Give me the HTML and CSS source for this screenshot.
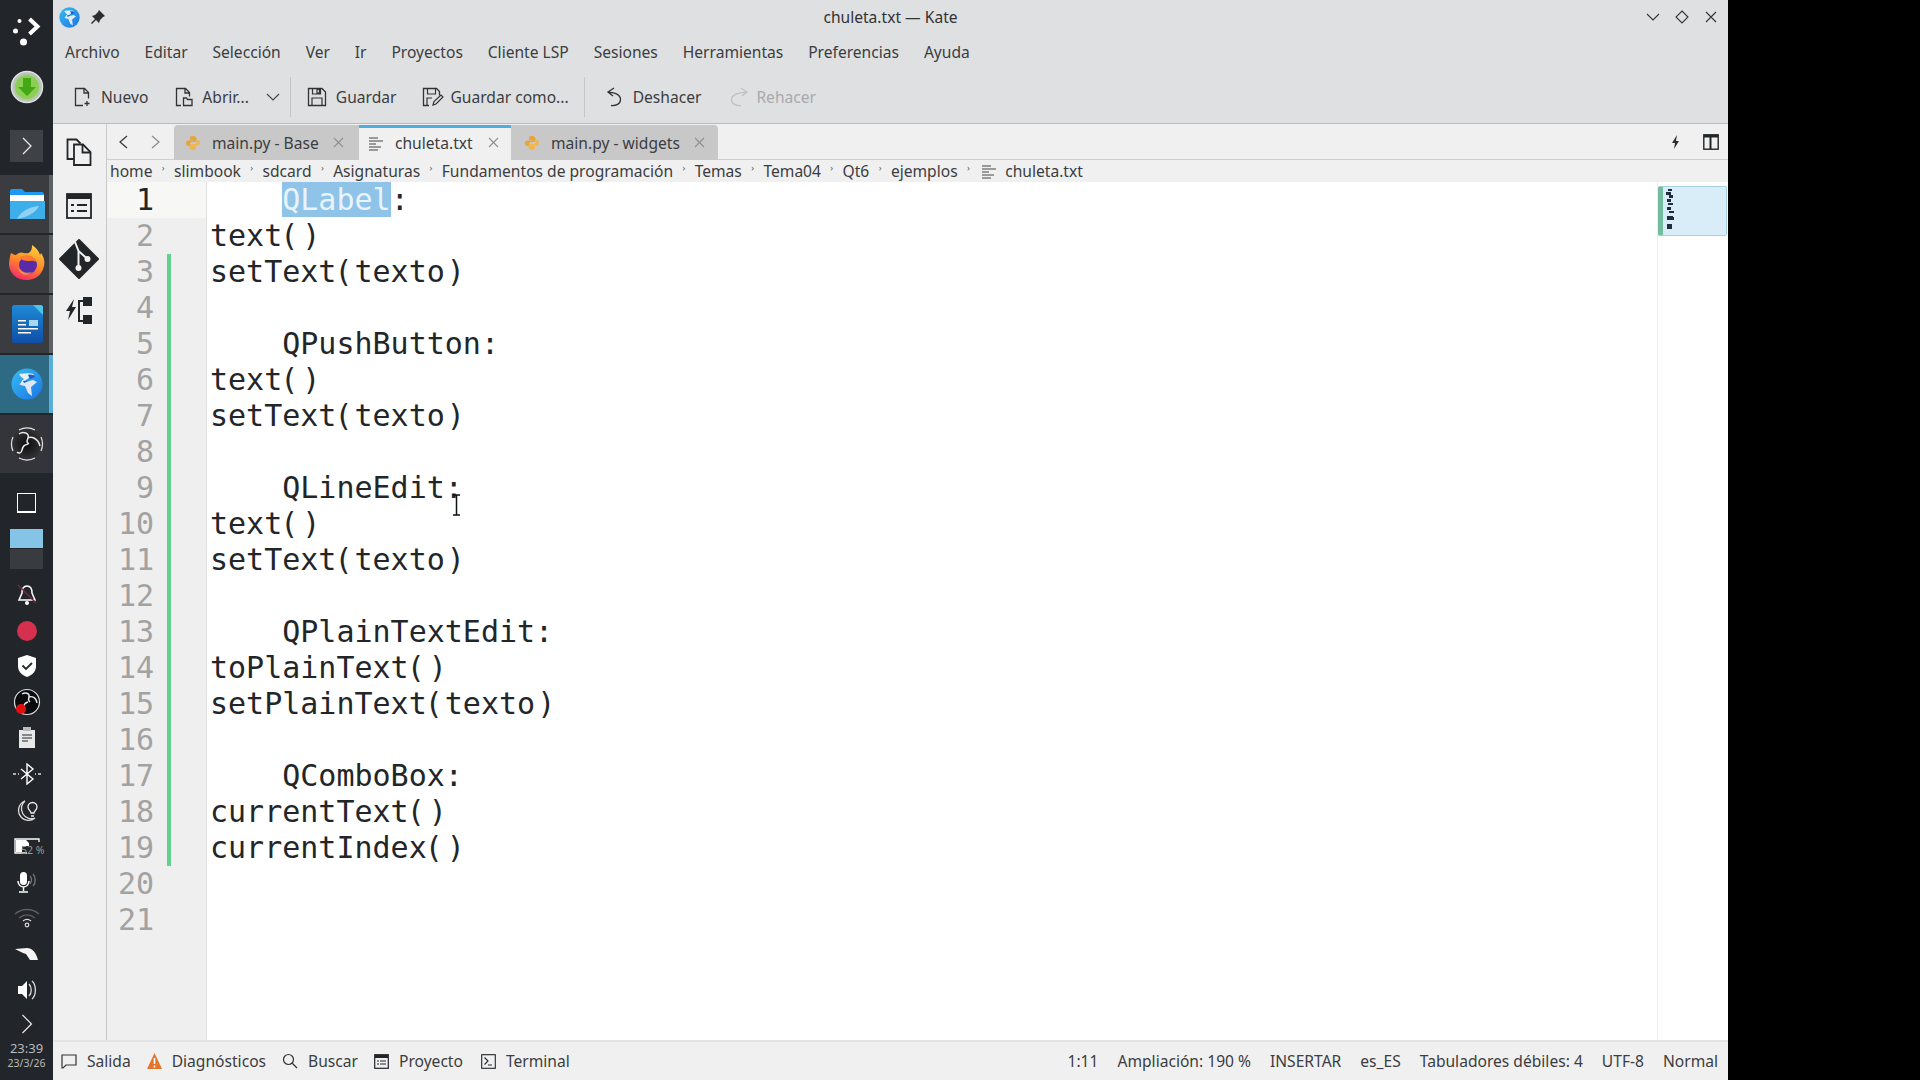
FILE: index.html
```html
<!DOCTYPE html>
<html lang="es">
<head>
<meta charset="utf-8">
<title>chuleta.txt — Kate</title>
<link rel="stylesheet" href="styles.css">
</head>
<body>
<svg class="defs" width="0" height="0">
  <defs>
    <linearGradient id="kategrad" x1="0" y1="0" x2="1" y2="1"><stop offset="0" stop-color="#38bdf0"/><stop offset="1" stop-color="#1a74e6"/></linearGradient>
    <linearGradient id="foxgrad" x1="0.7" y1="0" x2="0.3" y2="1"><stop offset="0" stop-color="#ffd23a"/><stop offset=".5" stop-color="#ff8a2a"/><stop offset="1" stop-color="#f5286a"/></linearGradient>
    <linearGradient id="writergrad" x1="0.5" y1="0" x2="0.5" y2="1"><stop offset="0" stop-color="#1f8ad6"/><stop offset="1" stop-color="#0f4ea6"/></linearGradient>
    <radialGradient id="obsgrad"><stop offset="0" stop-color="#0c0c0e"/><stop offset="1" stop-color="#38383c"/></radialGradient>
    <g id="py">
      <path d="M8 1C5 1 5 2.200 5 3.500V5h3.200v.6H3.200C1.800 5.600 1 6.800 1 8.200s.8 2.800 2.200 2.800H5V9.200c0-1.200 1-2.200 2.300-2.200h2.600C11 7 11.500 6 11.500 5V3.500C11.500 2 10 1 8 1z" fill="#e8a33a"/>
      <path d="M8 15c3 0 3-1.200 3-2.500V11H7.800v-.6h5c1.400 0 2.200-1.200 2.200-2.600S14.200 5 12.800 5H11.800v1.800c0 1.200-1 2.200-2.300 2.200H6.900C5.800 9 4.500 10 4.500 11v1.500C4.500 14 6 15 8 15z" fill="#f0b64e"/>
    </g>
    <g id="txt" stroke="#444" stroke-width="1.200" fill="none">
      <path d="M1 3h9M1 6h14M1 9h7M1 12h12M1 15h9"/>
    </g>
    <g id="close" stroke="#8f8f8f" stroke-width="1.100" fill="none">
      <path d="M1 1l9 9M10 1l-9 9"/>
    </g>
    <g id="kate">
      <circle cx="16" cy="16" r="15.500" fill="url(#kategrad)"/>
      <path d="M8 6c5-1 11-1 15 0l-8 6-3 4-3 1c1-3 2-5 4-6-2-1-4-3-5-5z" fill="#e8eff8"/>
      <path d="M8 16l14-4 4 2-6 5 1 9-4-3-3-7c-2 0-4-1-6-2z" fill="#dfe8f2"/>
      <path d="M17 7c3-1 6 0 7 2l-5 2zM12 13c2-.5 3-.5 5 0l-4 2z" fill="#1a5fc4"/>
    </g>
  </defs>
</svg>

<div class="desktop">
  <nav class="panel">
    <div class="launcher">
      <svg width="34" height="34" viewBox="0 0 34 34"><circle cx="9.500" cy="9" r="2" fill="#fff"/><circle cx="5.500" cy="19" r="2.500" fill="#fff"/><circle cx="13.500" cy="30" r="3.500" fill="#fff"/><path d="M19.500 7l8 7.500-8 7.500" fill="none" stroke="#fff" stroke-width="4"/></svg>
    </div>
    <div class="panel-app">
      <svg width="34" height="34" viewBox="0 0 34 34"><circle cx="17" cy="17" r="15.500" fill="#b9c4b6" stroke="#dfe5dd" stroke-width="1.500"/><circle cx="17" cy="17" r="12" fill="#8ccf55"/><path d="M13 8h8v9h5l-9 9-9-9h5z" fill="#43a813"/></svg>
    </div>
    <div class="panel-app">
      <div class="chevron-box"><svg width="12" height="20" viewBox="0 0 12 20"><path d="M2 2l8 8-8 8" fill="none" stroke="#e8e8e8" stroke-width="1.300"/></svg></div>
    </div>
    <div class="task task-grey">
      <svg width="36" height="32" viewBox="0 0 36 32"><path d="M1 3c0-1 .8-2 2-2h10l3 3h17c1 0 2 1 2 2v24H1z" fill="#1d99f3"/><rect x="1" y="7" width="34" height="10" fill="#fff"/><path d="M1 13h35v18H1z" fill="#3daee9"/><path d="M8 31c4-8 12-12 22-13-3 6-10 11-22 13z" fill="#8fd2f3"/></svg>
    </div>
    <div class="task task-grey">
      <svg width="38" height="38" viewBox="0 0 38 38"><path d="M3 8c2 1 3 2 5 2 2-2 5-3 7-2 3 0 5 1 7-1 2-2 2-5 2-7 5 3 7 7 8 10l1-2c3 4 4 9 3 13-2 9-9 14-17 14C9 35 2 29 1 20c0-4 1-9 2-12z" fill="url(#foxgrad)"/><circle cx="20" cy="20" r="9" fill="#5b2aa8"/><path d="M11 13c6-5 15-3 17 4-3-2-5-1-8-1-3-.2-6-1-9-3z" fill="#ff7a2a"/><path d="M10 22c3 5 9 7 14 5-5 5-13 3-14-5z" fill="#ffb03a" opacity=".7"/></svg>
    </div>
    <div class="task task-grey">
      <svg width="32" height="38" viewBox="0 0 32 38"><path d="M3 0h20l9 9v27c0 1-1 2-2 2H3c-1 0-2-1-2-2V2c0-1 1-2 2-2z" fill="url(#writergrad)"/><path d="M22 0h8c1 0 2 1 2 2v8z" fill="#4fc3e8"/><path d="M7 15h8v1.500H7zM7 19h8v1.500H7zM7 23h20v1.500H7zM7 27h13v1.500H7z" fill="#fff"/><rect x="18" y="15" width="9" height="6" fill="#a6d8f5"/></svg>
    </div>
    <div class="task task-active">
      <svg width="32" height="32" viewBox="0 0 32 32"><use href="#kate"/></svg>
    </div>
    <div class="task task-obs">
      <svg width="38" height="38" viewBox="0 0 38 38"><circle cx="19" cy="19" r="17.500" fill="url(#obsgrad)"/><path d="M11 5a17.500 17.500 0 0 1 16 0M33 12a17.500 17.500 0 0 1 0 14M27 33a17.500 17.500 0 0 1-16 0M5 26a17.500 17.500 0 0 1 0-14" fill="none" stroke="#e4e4e4" stroke-width="1.200"/><path d="M11 9c4-3 11-1 9 4-1 3-2 4 1 6M20 13c3-2 10 0 12 8M20 19c-4 1-5 2-6 6-.5 3-3 4-5 2" fill="none" stroke="#e8e8e8" stroke-width="1.500"/></svg>
    </div>
    <div class="tray">
      <div class="tray-item"><span class="win-icon"></span></div>
      <div class="pager"><div class="pager-on"></div><div class="pager-off"></div></div>
      <div class="tray-item tray-bell"><svg width="20" height="22" viewBox="0 0 20 22"><path d="M10 2c4 0 5 4 5 7l3 7H2l3-7c0-3 1-7 5-7z" fill="none" stroke="#fff" stroke-width="1.500"/><circle cx="10" cy="19" r="2" fill="#fff"/><path d="M1 1l18 18" stroke="#7a2838" stroke-width="1.500"/></svg></div>
      <div class="tray-item tray-tight"><span class="rec-dot"></span></div>
      <div class="tray-item"><svg width="22" height="24" viewBox="0 0 22 24"><path d="M11 1l9 3v8c0 6-4 9-9 11C6 21 2 18 2 12V4z" fill="#fff"/><path d="M6.500 11.500l3.500 3.500 6-6" fill="none" stroke="#23262b" stroke-width="1.800"/></svg></div>
      <div class="tray-item"><svg width="28" height="28" viewBox="0 0 28 28"><circle cx="14" cy="14" r="12.500" fill="#0b0b0d" stroke="#ddd" stroke-width="1.200"/><path d="M9 6c3-2 8-1 7 3-.5 2-1.500 3 1 5M16 9c3-1 7 0 8 6M15 14c-3 1-4 2-4 4" fill="none" stroke="#e8e8e8" stroke-width="1.400"/><circle cx="8" cy="21" r="5" fill="#e01010"/></svg></div>
      <div class="tray-item"><svg width="18" height="22" viewBox="0 0 18 22"><rect x="1" y="3" width="16" height="18" fill="#e8e8e8"/><rect x="5" y="0" width="8" height="4" fill="#bbb"/><path d="M4 8h10M4 11h10M4 14h6" stroke="#23262b" stroke-width="1.200"/></svg></div>
      <div class="tray-item"><svg width="30" height="22" viewBox="0 0 30 22"><path d="M9 6l12 10-6 5V1l6 5L9 16" fill="none" stroke="#fff" stroke-width="1.400"/><path d="M1 11h3M6 11h1M23 11h1M26 11h3" stroke="#ddd" stroke-width="1.400"/></svg></div>
      <div class="tray-item"><svg width="22" height="24" viewBox="0 0 22 24"><path d="M9 3a10 10 0 1 0 10 17A10 10 0 0 1 9 3z" fill="none" stroke="#ddd" stroke-width="1.300"/><path d="M15 15c0-2-3-3-3-6a4.500 4.500 0 0 1 9 0c0 3-3 4-3 6z" fill="#23262b" stroke="#eee" stroke-width="1.300"/><path d="M15 18h3" stroke="#eee" stroke-width="1.500"/></svg></div>
      <div class="tray-item battery"><svg width="26" height="16" viewBox="0 0 26 16"><path d="M25 4V1H1v14h12" fill="none" stroke="#fff" stroke-width="1.300"/><path d="M2 2h10l3 3v3H8v6H2z" fill="#fff"/></svg><span class="batt-text">52 %</span></div>
      <div class="tray-item"><svg width="20" height="22" viewBox="0 0 20 22"><rect x="3" y="1" width="7" height="13" rx="3.500" fill="#fff"/><path d="M1 10c0 3 2 6 5.500 6s5.500-3 5.500-6M6.500 16v4M2 21h9" fill="none" stroke="#fff" stroke-width="1.500"/><path d="M13 5c2 2 2 6 0 8M16 3c3 3 3 9 0 12" fill="none" stroke="#777" stroke-width="1.300"/></svg></div>
      <div class="tray-item"><svg width="26" height="20" viewBox="0 0 26 20"><path d="M1 6c7-6 17-6 24 0M5 10c5-4 11-4 16 0" fill="none" stroke="#5c6066" stroke-width="1.300"/><path d="M9 13c2.500-2 5.500-2 8 0" fill="none" stroke="#ddd" stroke-width="1.300"/><circle cx="13" cy="17" r="1.800" fill="none" stroke="#ddd" stroke-width="1.200"/></svg></div>
      <div class="tray-item"><svg width="24" height="12" viewBox="0 0 24 12"><path d="M0 1l12-1c5 0 9 4 11 12H15l-4-6-3-1z" fill="#f4f4f4"/></svg></div>
      <div class="tray-item"><svg width="20" height="24" viewBox="0 0 20 24"><path d="M1 8h4l5-5v18l-5-5H1z" fill="#fff"/><path d="M12 6c3 3 3 9 0 12M15 3c4.500 4 4.500 14 0 18" fill="none" stroke="#ddd" stroke-width="1.300"/></svg></div>
      <div class="tray-item tray-arrow"><svg width="12" height="20" viewBox="0 0 12 20"><path d="M1.500 1l9 9-9 9" fill="none" stroke="#e8e8e8" stroke-width="1.200"/></svg></div>
    </div>
    <div class="clock"><span class="clock-time">23:39</span><span class="clock-date">23/3/26</span></div>
  </nav>

  <main class="window">
    <header class="titlebar">
      <div class="title-left">
        <svg width="21" height="21" viewBox="0 0 32 32"><use href="#kate"/></svg>
        <svg width="14" height="14" viewBox="0 0 14 14"><path d="M8 0l6 6-2 1-3 3-1 3-3-3-4 4-1-1 4-4-3-3 3-1 3-3z" fill="#2d2d2d"/></svg>
      </div>
      <span class="title-text">chuleta.txt — Kate</span>
      <div class="title-btns">
        <svg width="14" height="14" viewBox="0 0 14 14"><path d="M1 4l6 6 6-6" fill="none" stroke="#333" stroke-width="1.100"/></svg>
        <svg width="14" height="14" viewBox="0 0 14 14"><path d="M7 1l6 6-6 6-6-6z" fill="none" stroke="#333" stroke-width="1.100"/></svg>
        <svg width="14" height="14" viewBox="0 0 14 14"><path d="M2 2l10 10M12 2L2 12" fill="none" stroke="#333" stroke-width="1.100"/></svg>
      </div>
    </header>
    <div class="menubar">
      <span>Archivo</span><span>Editar</span><span>Selección</span><span>Ver</span><span>Ir</span><span>Proyectos</span><span>Cliente LSP</span><span>Sesiones</span><span>Herramientas</span><span>Preferencias</span><span>Ayuda</span>
    </div>
    <div class="toolbar">
      <div class="tool tool-new">
        <svg width="18" height="20" viewBox="0 0 18 20"><path d="M9 18.500H1.500V1.500h9l4 4v6M10 1.500v4.500h4.500M13 14v5M10.500 16.500h5" fill="none" stroke="#333" stroke-width="1.300"/></svg>
        <span>Nuevo</span>
      </div>
      <div class="tool tool-open">
        <svg width="18" height="20" viewBox="0 0 18 20"><path d="M6 18.500H1.500V1.500h9l4 4v4M10 1.500v4.500h4.500" fill="none" stroke="#333" stroke-width="1.300"/><path d="M8.500 11h3l1 1.500h4.500v6H8.500z" fill="none" stroke="#333" stroke-width="1.300"/></svg>
        <span>Abrir...</span>
        <svg class="open-chev" width="14" height="8" viewBox="0 0 14 8"><path d="M1 1l6 6 6-6" fill="none" stroke="#444" stroke-width="1.100"/></svg>
      </div>
      <div class="tool-sep"></div>
      <div class="tool tool-save">
        <svg width="20" height="20" viewBox="0 0 20 20"><path d="M1.500 1.500h13.500l3.500 3.500v13.500H1.500z" fill="none" stroke="#333" stroke-width="1.300"/><path d="M5.500 1.500v5.500h8V1.500M10 2.500v3.500h2.500V2.500z" fill="none" stroke="#333" stroke-width="1.200"/><path d="M5 18v-7h10v7" fill="none" stroke="#333" stroke-width="1.200"/></svg>
        <span>Guardar</span>
      </div>
      <div class="tool tool-saveas">
        <svg width="22" height="20" viewBox="0 0 22 20"><path d="M7 18.500H1.500V1.500h13l3 3v4" fill="none" stroke="#333" stroke-width="1.300"/><path d="M5.500 1.500v5.500h8V1.500M5 18v-7h5" fill="none" stroke="#333" stroke-width="1.200"/><path d="M11 18l1-3.500 7-6.500 2 2-7 7z" fill="none" stroke="#333" stroke-width="1.200"/></svg>
        <span>Guardar como...</span>
      </div>
      <div class="tool-sep tool-sep-wide"></div>
      <div class="tool tool-undo">
        <svg width="16" height="20" viewBox="0 0 16 20"><path d="M8 1L2 5l5 4M2.500 5.500C9 5 14.500 8 14.500 12.500S10 19 5 18.500" fill="none" stroke="#333" stroke-width="1.300"/></svg>
        <span>Deshacer</span>
      </div>
      <div class="tool tool-redo">
        <svg width="18" height="20" viewBox="0 0 18 20"><path d="M11 1l6 4-5 4M16.500 5.500C9 5 1.500 8 1.500 12.500S6 19 11 18.500" fill="none" stroke="#c0c1c3" stroke-width="1.200"/></svg>
        <span>Rehacer</span>
      </div>
    </div>
    <div class="workspace">
      <aside class="sidebar">
        <svg width="26" height="28" viewBox="0 0 26 28"><path d="M8 21H1.500V1.500h9l4 4" fill="none" stroke="#232629" stroke-width="1.800"/><path d="M8 6.500h9l7.500 7.500v13H8z" fill="#f0f0f0" stroke="#232629" stroke-width="1.800"/><path d="M16.500 6.500v8h8" fill="none" stroke="#232629" stroke-width="1.800"/></svg>
        <svg class="side-proj" width="26" height="26" viewBox="0 0 26 26"><rect x="1" y="1" width="24" height="24" fill="none" stroke="#232629" stroke-width="1.800"/><rect x="1" y="1" width="24" height="5" fill="#232629"/><path d="M5 12h3M11 12h10M5 18h3M11 18h10" stroke="#232629" stroke-width="2"/></svg>
        <svg class="side-git" width="40" height="40" viewBox="0 0 40 40"><path d="M20 1l19 19-19 19L1 20z" fill="#232629" stroke="#232629" stroke-linejoin="round" stroke-width="2"/><path d="M16 3l3.500 9v16M19.500 12l9 8" fill="none" stroke="#f0f0f0" stroke-width="2"/><circle cx="19.500" cy="29" r="3" fill="#f0f0f0"/><circle cx="28.500" cy="20" r="3" fill="#f0f0f0"/></svg>
        <svg class="side-lsp" width="26" height="28" viewBox="0 0 26 28"><path d="M8 2L0 14h4l-2 9 8-13H6z" fill="#232629"/><path d="M23 4h-10v20h10" fill="none" stroke="#232629" stroke-width="2"/><rect x="17" y="0" width="9" height="9" fill="#232629"/><rect x="17" y="18" width="9" height="9" fill="#232629"/></svg>
      </aside>
      <section class="main-area">
        <div class="tabbar">
          <div class="tab-nav">
            <svg width="10" height="14" viewBox="0 0 10 14"><path d="M9 1L2 7l7 6" fill="none" stroke="#333" stroke-width="1.200"/></svg>
            <svg width="10" height="14" viewBox="0 0 10 14"><path d="M1 1l7 6-7 6" fill="none" stroke="#8a8a8a" stroke-width="1.200"/></svg>
          </div>
          <div class="tab tab-first">
            <svg width="16" height="16" viewBox="0 0 16 16"><use href="#py"/></svg>
            <span class="tab-label">main.py - Base</span>
            <svg width="11" height="11" viewBox="0 0 11 11"><use href="#close"/></svg>
          </div>
          <div class="tab tab-current">
            <svg width="16" height="16" viewBox="0 0 16 16"><use href="#txt"/></svg>
            <span class="tab-label">chuleta.txt</span>
            <svg width="11" height="11" viewBox="0 0 11 11"><use href="#close"/></svg>
          </div>
          <div class="tab tab-last">
            <svg width="16" height="16" viewBox="0 0 16 16"><use href="#py"/></svg>
            <span class="tab-label">main.py - widgets</span>
            <svg width="11" height="11" viewBox="0 0 11 11"><use href="#close"/></svg>
          </div>
          <div class="tab-tools">
            <svg width="10" height="14" viewBox="0 0 10 14"><path d="M6 0L1 8h3l-1 6 5-8H5z" fill="#2d2d2d"/></svg>
            <svg width="16" height="16" viewBox="0 0 16 16"><rect x=".8" y=".8" width="14.400" height="14.400" fill="none" stroke="#232629" stroke-width="1.400"/><rect x="1" y="1" width="14" height="2.500" fill="#232629"/><path d="M6.500 1v14h2V1" fill="#232629"/></svg>
          </div>
        </div>
        <div class="crumbs">
          <span>home</span><i>›</i><span>slimbook</span><i>›</i><span>sdcard</span><i>›</i><span>Asignaturas</span><i>›</i><span>Fundamentos de programación</span><i>›</i><span>Temas</span><i>›</i><span>Tema04</span><i>›</i><span>Qt6</span><i>›</i><span>ejemplos</span><i>›</i>
          <svg width="16" height="16" viewBox="0 0 16 16"><use href="#txt"/></svg><span>chuleta.txt</span>
        </div>
        <div class="editor-wrap">
          <div class="editor">
            <div class="row row-current"><b>1</b><u></u><pre>    <mark>QLabel</mark>:</pre></div>
            <div class="row"><b>2</b><u></u><pre>text<em>(</em><s>)</s></pre></div>
            <div class="row row-mod"><b>3</b><u></u><pre>setText<em>(</em>texto<s>)</s></pre></div>
            <div class="row row-mod"><b>4</b><u></u><pre></pre></div>
            <div class="row row-mod"><b>5</b><u></u><pre>    QPushButton:</pre></div>
            <div class="row row-mod"><b>6</b><u></u><pre>text<em>(</em><s>)</s></pre></div>
            <div class="row row-mod"><b>7</b><u></u><pre>setText<em>(</em>texto<s>)</s></pre></div>
            <div class="row row-mod"><b>8</b><u></u><pre></pre></div>
            <div class="row row-mod"><b>9</b><u></u><pre>    QLineEdit:</pre></div>
            <div class="row row-mod"><b>10</b><u></u><pre>text<em>(</em><s>)</s></pre></div>
            <div class="row row-mod"><b>11</b><u></u><pre>setText<em>(</em>texto<s>)</s></pre></div>
            <div class="row row-mod"><b>12</b><u></u><pre></pre></div>
            <div class="row row-mod"><b>13</b><u></u><pre>    QPlainTextEdit:</pre></div>
            <div class="row row-mod"><b>14</b><u></u><pre>toPlainText<em>(</em><s>)</s></pre></div>
            <div class="row row-mod"><b>15</b><u></u><pre>setPlainText<em>(</em>texto<s>)</s></pre></div>
            <div class="row row-mod"><b>16</b><u></u><pre></pre></div>
            <div class="row row-mod"><b>17</b><u></u><pre>    QComboBox:</pre></div>
            <div class="row row-mod"><b>18</b><u></u><pre>currentText<em>(</em><s>)</s></pre></div>
            <div class="row row-mod"><b>19</b><u></u><pre>currentIndex<em>(</em><s>)</s></pre></div>
            <div class="row"><b>20</b><u></u><pre></pre></div>
            <div class="row"><b>21</b><u></u><pre></pre></div>
            <div class="gutter-fill"></div>
          </div>
          <div class="minimap">
            <div class="mini-view">
              <svg width="12" height="42" viewBox="0 0 12 42"><path d="M3 1h4v2H3zM1 4h5v3H1zM4 7h4v3H4zM2 11h4v3H2zM3 15h5v2H3zM2 19h4v3H2zM4 23h5v2H4zM2 28h6v4H2zM5 29h4v3H5zM2 36h5v5H2z" fill="#232c3b"/></svg>
            </div>
          </div>
          <svg class="ibeam" width="9" height="22" viewBox="0 0 9 22"><path d="M1 1h7M1 21h7M4.500 1v20" fill="none" stroke="#111" stroke-width="1.500"/></svg>
        </div>
      </section>
    </div>
    <footer class="statusbar">
      <div class="status-left">
        <span class="st"><svg width="16" height="15" viewBox="0 0 16 15"><path d="M1 1h14v10H5l-3 3h-1z" fill="none" stroke="#333" stroke-width="1.200"/></svg>Salida</span>
        <span class="st"><svg width="15" height="16" viewBox="0 0 15 16"><path d="M7.500 0L15 16H0z" fill="#e4752b"/><path d="M7.500 5v6M7.500 12.500v2" stroke="#fff" stroke-width="1.600"/></svg>Diagnósticos</span>
        <span class="st"><svg width="16" height="16" viewBox="0 0 16 16"><circle cx="6.500" cy="6.500" r="5" fill="none" stroke="#333" stroke-width="1.200"/><path d="M10 10l5 5" stroke="#333" stroke-width="1.300"/></svg>Buscar</span>
        <span class="st"><svg width="15" height="15" viewBox="0 0 15 15"><rect x=".7" y=".7" width="13.600" height="13.600" fill="none" stroke="#232629" stroke-width="1.200"/><rect x="1" y="1" width="13" height="3" fill="#232629"/><path d="M3 7h2M6 7h6M3 10h2M6 10h6" stroke="#232629" stroke-width="1.200"/></svg>Proyecto</span>
        <span class="st st-term"><svg width="15" height="15" viewBox="0 0 15 15"><rect x=".7" y=".7" width="13.600" height="13.600" fill="none" stroke="#232629" stroke-width="1.100"/><path d="M3.500 3.500L7 7l-3.500 3.500M7 11h4" fill="none" stroke="#232629" stroke-width="1.100"/></svg>Terminal</span>
      </div>
      <div class="status-right">
        <span>1:11</span><span>Ampliación: 190 %</span><span>INSERTAR</span><span>es_ES</span><span>Tabuladores débiles: 4</span><span>UTF-8</span><span>Normal</span>
      </div>
    </footer>
  </main>
  <div class="blackout"></div>
</div>
</body>
</html>
```
FILE: styles.css
```css
* { box-sizing: border-box; }
html, body { margin: 0; height: 100%; background: #000; overflow: hidden; }
body { font-family: "Noto Sans", sans-serif; font-size: 15.6px; color: #3b3d40; }
.defs { position: absolute; }
svg { display: block; flex: none; }

.desktop { display: flex; width: 1920px; height: 1080px; }
.blackout { width: 192px; background: #000; flex: none; }

/* panel */
.panel { width: 53px; flex: none; background: #22252a; display: flex; flex-direction: column; align-items: stretch; height: 1080px; }
.launcher { height: 57px; display: flex; align-items: center; justify-content: center; }
.panel-app { height: 59px; display: flex; align-items: center; justify-content: center; }
.chevron-box { width: 33px; height: 32px; background: #3e4145; display: flex; align-items: center; justify-content: center; }
.task { height: 58px; margin-bottom: 2px; display: flex; align-items: center; justify-content: center; }
.task-grey { background: #3a3c40; box-shadow: inset -4px 0 0 #5e6063; }
.task-active { background: #2e6a84; box-shadow: inset -4px 0 0 #5aaedb; }
.task-obs { background: #33353a; }
.tray { display: flex; flex-direction: column; margin-top: 10px; }
.tray-item { height: 36px; display: flex; align-items: center; justify-content: center; position: relative; }
.tray-bell { height: 38px; margin-top: 7px; }
.tray-tight { height: 34px; }
.tray-arrow { height: 32px; }
.win-icon { width: 19px; height: 20px; border: 1.500px solid #fff; border-bottom-width: 2px; }
.pager { width: 33px; align-self: center; margin-top: 8px; }
.pager-on { height: 19px; background: #85c4e6; }
.pager-off { height: 20px; margin-top: 1px; background: #383b40; }
.rec-dot { width: 20px; height: 20px; border-radius: 50%; background: #d6304f; }
.batt-text { position: absolute; left: 21px; top: 15px; font-size: 10.500px; color: #999; line-height: 14px; }
.clock { display: flex; flex-direction: column; align-items: center; color: #b8babd; }
.clock-time { font-size: 13px; line-height: 16px; }
.clock-date { font-size: 10.500px; line-height: 14px; }

/* window */
.window { width: 1675px; flex: none; height: 1080px; display: flex; flex-direction: column; background: #f0f0f0; }
.titlebar { height: 34px; background: #dfe0e2; display: grid; grid-template-columns: 1fr auto 1fr; align-items: center; padding: 0 10px; }
.title-left { display: flex; align-items: center; gap: 11px; margin-left: -4px; }
.title-text { color: #333; }
.title-btns { display: flex; gap: 15px; justify-content: flex-end; }
.menubar { height: 35px; background: #dfe0e2; display: flex; align-items: center; padding: 1px 12px 0; gap: 24.900px; }
.toolbar { height: 55px; background: #dfe0e2; border-bottom: 1px solid #b9babc; display: flex; align-items: center; padding: 2px 0 0 21px; }
.tool { display: flex; align-items: center; gap: 9px; }
.tool-redo { margin-left: 29px; color: #a9aaac; gap: 8px; }
.tool-open { margin-left: 27px; }
.open-chev { margin-left: 8px; }
.tool-sep { width: 1px; height: 40px; background: #c4c5c7; margin-left: 10px; }
.tool-sep-wide { margin-left: 15px; }
.tool-save { margin-left: 16px; gap: 9px; }
.tool-saveas { margin-left: 26px; gap: 6px; }
.tool-undo { margin-left: 21px; gap: 11px; }

.workspace { flex: 1; display: flex; min-height: 0; }
.sidebar { width: 54px; flex: none; background: #f0f0f0; border-right: 1px solid #c9c9c9; display: flex; flex-direction: column; align-items: center; padding-top: 14px; padding-right: 1px; }
.side-proj { margin-top: 27px; }
.side-git { margin-top: 20px; }
.side-lsp { margin-top: 18px; }
.main-area { flex: 1; display: flex; flex-direction: column; min-width: 0; background: #f0f0f0; }

.tabbar { height: 36px; display: flex; align-items: stretch; position: relative; border-bottom: 1px solid #cfcfcf; flex: none; }
.tab-nav { width: 67px; display: flex; align-items: center; gap: 23px; padding-left: 11px; flex: none; }
.tab { display: flex; align-items: center; padding: 0 15px 0 11px; background: #c8c8c8; height: 35px; margin-top: 1px; }
.tab-first { width: 185px; border-radius: 4px 0 0 0; }
.tab-current { width: 152px; background: #f0f0f0; border-top: 3px solid #4fafdc; padding: 0 12px 3px 9px; }
.tab-last { width: 207px; border-radius: 0 4px 0 0; padding: 0 13px 0 13px; }
.tab .tab-label { flex: 1; padding-left: 11px; white-space: nowrap; }
.tab-tools { margin-left: auto; display: flex; align-items: center; gap: 22px; padding-right: 9px; }

.crumbs { height: 22px; flex: none; display: flex; align-items: center; padding: 0 0 0 3px; white-space: nowrap; }
.crumbs i { font-style: normal; font-size: 9px; width: 21.600px; text-align: center; position: relative; top: -4px; color: #555; }
.crumbs svg { margin: 0 8px 0 2px; }

.editor-wrap { flex: 1; display: flex; min-height: 0; background: #fff; position: relative; }
.editor { flex: 1; min-width: 0; display: flex; flex-direction: column; }
.row { height: 36px; flex: none; display: flex; }
.row b { width: 47px; flex: none; background: #efefef; text-align: right; font: 400 30px/36px "DejaVu Sans Mono", monospace; color: #a2a2a2; }
.row u { width: 53px; flex: none; background: #efefef; border-right: 1px solid #e2e2e2; text-decoration: none; position: relative; }
.row-mod u::before { content: ""; position: absolute; left: 13px; top: 0; bottom: 0; width: 4px; background: #5fd38b; }
.row pre { margin: 0 0 0 3px; font: 400 30px/36px "DejaVu Sans Mono", monospace; color: #232629; white-space: pre; }
.row pre em { font-style: normal; margin: 0 2px 0 -2px; }
.row pre s { text-decoration: none; margin: 0 -2px 0 2px; }
.row-current b, .row-current u { background: #f7f7f5; }
.row-current b { color: #232629; }
.row mark { background: #8fc3e8; color: #e8f3fb; }
.gutter-fill { flex: 1; width: 100px; background: #efefef; border-right: 1px solid #e2e2e2; }
.minimap { width: 71px; flex: none; background: #fff; border-left: 1px solid #eee; padding: 4px 1px 0 0; }
.mini-view { height: 50px; background: #d8edf8; border: 1px solid #a9cfe4; border-left: 5px solid #74bc9f; border-radius: 2px; padding: 1px 0 0 2px; }
.ibeam { position: absolute; left: 345px; top: 312px; }

.statusbar { height: 40px; flex: none; border-top: 2px solid #e4e4e4; display: flex; align-items: center; justify-content: space-between; padding: 0 10px 0 8px; background: #f0f0f0; }
.status-left { display: flex; gap: 16px; }
.status-right { display: flex; gap: 19px; }
.st { display: flex; align-items: center; gap: 10px; }
.st-term { margin-left: 2px; }
```
